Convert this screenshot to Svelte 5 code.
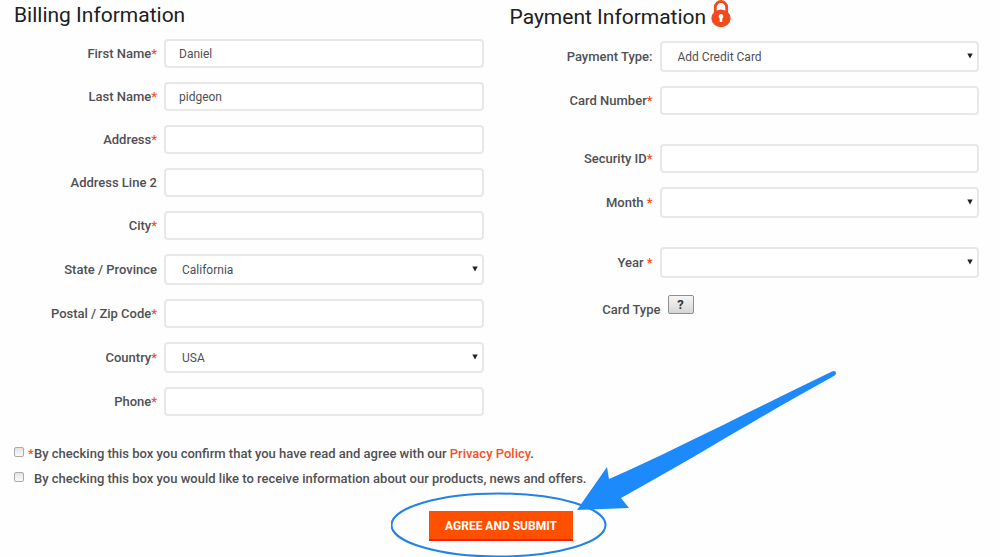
<script>
  const billing = [
    { id: 'first', label: 'First Name', required: true, value: 'Daniel' },
    { id: 'last', label: 'Last Name', required: true, value: 'pidgeon' },
    { id: 'address', label: 'Address', required: true },
    { id: 'address2', label: 'Address Line 2' },
    { id: 'city', label: 'City', required: true },
    { id: 'state', label: 'State / Province', options: ['California'] },
    { id: 'zip', label: 'Postal / Zip Code', required: true },
    { id: 'country', label: 'Country', required: true, options: ['USA'] },
    { id: 'phone', label: 'Phone', required: true }
  ];
  const payment = [
    { id: 'type', label: 'Payment Type:', options: ['Add Credit Card'] },
    { id: 'number', label: 'Card Number', required: true, spaced: true },
    { id: 'security', label: 'Security ID', required: true },
    { id: 'month', label: 'Month ', required: true, options: [''], spaced: true },
    { id: 'year', label: 'Year ', required: true, options: [''] }
  ];
</script>

{#snippet field(f)}
  <div class="row" class:spaced={f.spaced}>
    <label for={f.id}>{f.label}{#if f.required}<span class="star">*</span>{/if}</label>
    {#if f.options}
      <div class="select">
        <select id={f.id}>
          {#each f.options as o}<option>{o}</option>{/each}
        </select>
        <svg class="caret" viewBox="0 0 6 6" aria-hidden="true"><path d="M0.3 0.5H5.7L3 5.6Z" fill="#222" /></svg>
      </div>
    {:else}
      <input id={f.id} type="text" value={f.value ?? ''} />
    {/if}
  </div>
{/snippet}

<form onsubmit={(e) => e.preventDefault()}>
  <div class="columns">
    <section>
      <h2>Billing Information</h2>
      {#each billing as f}{@render field(f)}{/each}
    </section>
    <section class="payment">
      <h2>
        Payment Information
        <svg class="lock" viewBox="0 0 20 28" aria-hidden="true">
          <path d="M4.3 14V7.2a5.7 5.7 0 0 1 11.4 0V14" fill="none" stroke="#f04a1d" stroke-width="2.8" />
          <ellipse cx="10" cy="18.3" rx="9.6" ry="8.9" fill="#f04a1d" />
          <path d="M10 14a2.4 2.4 0 0 0-1.3 4.4V22h2.6v-3.6A2.4 2.4 0 0 0 10 14Z" fill="#fff" />
        </svg>
      </h2>
      {#each payment as f}{@render field(f)}{/each}
      <div class="row card">
        <span class="name" id="card-type">Card Type</span>
        <button type="button" class="help" aria-describedby="card-type">?</button>
      </div>
    </section>
  </div>

  <div class="consents">
    <div class="consent">
      <input id="privacy" type="checkbox" />
      <span class="star">*</span>
      <label for="privacy">By checking this box you confirm that you have read and agree with our <a href="#privacy">Privacy Policy</a>.</label>
    </div>
    <div class="consent">
      <input id="news" type="checkbox" />
      <span class="star"></span>
      <label for="news">By checking this box you would like to receive information about our products, news and offers.</label>
    </div>
  </div>

  <div class="actions">
    <div class="submit">
      <button type="submit">AGREE AND SUBMIT</button>
      <svg class="callout" viewBox="0 0 450 194" aria-hidden="true">
        <ellipse cx="107.500" cy="161" rx="107" ry="31.500" fill="none" stroke="#2383e2" stroke-width="2" />
        <path d="M186 146 216 103 218 115 C288 84 365 44 441 7.500 Q445 6 445 9.500 Q445 11 442 12.500 C368 53 298 97 230 134 L238 144Z" fill="#1c8afb" />
      </svg>
    </div>
  </div>
</form>

<style>
  :global(body) {
    margin: 0;
    background: #fefefe;
    color: #505054;
    font-family: Roboto, "Liberation Sans", sans-serif;
    font-size: 13px;
    overflow-x: hidden;
  }
  form {
    overflow: hidden;
    padding-bottom: 17px;
  }
  .columns {
    display: grid;
    grid-template-columns: 1fr 1fr;
    gap: 26px;
    padding: 0 21px 0 14px;
  }
  h2 {
    display: flex;
    gap: 5px;
    margin: 0 0 9px;
    font-size: 21px;
    font-weight: 400;
    line-height: 30px;
    color: #202022;
  }
  .payment h2 {
    line-height: 34px;
    margin-bottom: 7px;
  }
  .lock {
    width: 20px;
    height: 28px;
  }
  .row {
    display: grid;
    grid-template-columns: 143px 1fr;
    align-items: center;
    gap: 7px;
    margin-bottom: 14px;
  }
  .row.spaced {
    margin-bottom: 29px;
  }
  .row label,
  .name {
    text-align: right;
    font-weight: 500;
    white-space: pre;
  }
  .star {
    color: #f4511e;
  }
  .row input,
  select {
    box-sizing: border-box;
    width: 100%;
    height: 29px;
    border: 2px solid #e8e8e8;
    border-radius: 4px;
    background: #fff;
    color: #505054;
    font: 400 12px Roboto, "Liberation Sans", sans-serif;
    padding: 0 13px;
  }
  select {
    display: block;
    height: 31px;
    appearance: none;
    padding: 0 16px;
  }
  .select {
    position: relative;
  }
  .caret {
    position: absolute;
    top: 12px;
    right: 6px;
    width: 6px;
    height: 6px;
    pointer-events: none;
  }
  .row.card {
    margin: 17px 0 0;
    align-items: start;
  }
  .card .name {
    padding-top: 7px;
    margin-right: -8px;
  }
  .help {
    justify-self: start;
    margin-left: 8px;
    width: 26px;
    height: 19px;
    padding: 0;
    border: 1px solid #8f8f8f;
    border-radius: 2px;
    background: linear-gradient(#f6f6f6, #d6d6d6);
    font: 700 13px Roboto, "Liberation Sans", sans-serif;
    color: #333;
  }
  .consents {
    padding: 11px 14px 0;
  }
  .consent {
    display: flex;
    line-height: 25px;
    font-weight: 500;
  }
  .consent input {
    appearance: none;
    box-sizing: border-box;
    width: 10px;
    height: 10px;
    margin: 6px 4px 0 0;
    border: 1px solid #aaa;
    border-radius: 2px;
    background: linear-gradient(#e4e4e4, #fafafa);
  }
  .consent .star {
    width: 6px;
  }
  a {
    color: #f4511e;
    text-decoration: none;
  }
  .actions {
    display: flex;
    justify-content: center;
    padding: 20px 0 0 2px;
  }
  .submit {
    position: relative;
  }
  .submit button {
    width: 144px;
    height: 30px;
    padding: 2px 0 0;
    border: 0;
    border-bottom: 2px solid #fb1c00;
    background: #ff5000;
    color: #fff;
    font: 700 12px Roboto, "Liberation Sans", sans-serif;
  }
  .callout {
    position: absolute;
    left: -38px;
    bottom: -17px;
    width: 450px;
    height: 194px;
    pointer-events: none;
  }
</style>
